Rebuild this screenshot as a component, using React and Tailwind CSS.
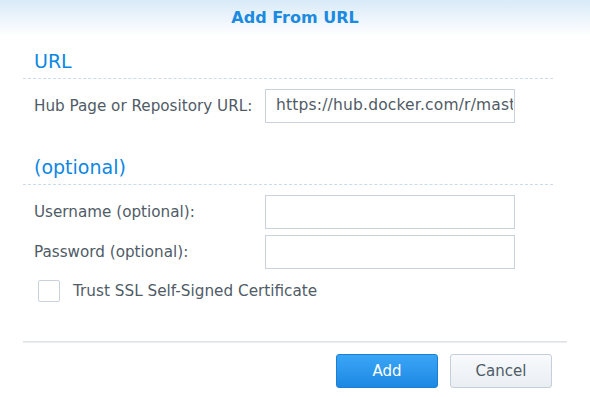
export default function App() {
  return (
    <div className="w-[590px] h-[397px] bg-white overflow-hidden flex flex-col" style={{ fontFamily: '"DejaVu Sans", Verdana, sans-serif' }}>
      <div className="h-[36px] shrink-0 flex items-center justify-center bg-gradient-to-b from-[#d9eaf8] to-white">
        <span className="text-[16px] font-bold text-[#1b8ae0]">Add From URL</span>
      </div>
      <div className="px-[23px] flex-1 flex flex-col">
        <div className="mt-[13px] mr-[14px] pl-[11px] pb-[5px] h-[30px] border-b border-dashed border-[#c9dcec] text-[19px] leading-[24px] text-[#0b87e3]">URL</div>
        <div className="mt-[10px] flex items-center pl-[11px]">
          <div className="w-[231px] text-[15.2px] text-[#505b66]">Hub Page or Repository URL:</div>
          <div className="w-[250px] h-[34px] border border-[#c8d1dc] pl-[10px] pr-[1px] flex items-center">
            <div className="overflow-hidden whitespace-nowrap text-[15.5px] tracking-[0.18px] text-[#505b66]">https://hub.docker.com/r/mastodon/mastodon</div>
          </div>
        </div>
        <div className="mt-[32px] mr-[14px] pl-[11px] pb-[5px] h-[30px] border-b border-dashed border-[#c9dcec] text-[19px] leading-[24px] text-[#0b87e3]">(optional)</div>
        <div className="mt-[10px] flex items-center pl-[11px]">
          <div className="w-[231px] text-[15.2px] text-[#505b66]">Username (optional):</div>
          <div className="w-[250px] h-[34px] border border-[#c8d1dc]"></div>
        </div>
        <div className="mt-[6px] flex items-center pl-[11px]">
          <div className="w-[231px] text-[15.2px] text-[#505b66]">Password (optional):</div>
          <div className="w-[250px] h-[34px] border border-[#c8d1dc]"></div>
        </div>
        <div className="mt-[11px] flex items-center pl-[15px]">
          <div className="w-[22px] h-[22px] border border-[#c8d1dc] rounded-[2px] bg-white"></div>
          <div className="ml-[13px] text-[15.25px] text-[#505b66]">Trust SSL Self-Signed Certificate</div>
        </div>
        <div className="mt-auto h-[2px] bg-gradient-to-b from-[#dcdfe3] to-[#f0f1f3]"></div>
        <div className="mt-[11px] mb-[9px] flex justify-end gap-[12px] pr-[15px]">
          <button className="w-[102px] h-[34px] rounded-[3px] border border-[#1b7fd6] bg-gradient-to-b from-[#3aa6f6] to-[#1d88e3] text-white text-[15px]" style={{ fontFamily: '"DejaVu Sans", Verdana, sans-serif' }}>Add</button>
          <button className="w-[102px] h-[34px] rounded-[3px] border border-[#c5cfdb] bg-gradient-to-b from-[#f8fafc] to-[#e9eef3] text-[#505b66] text-[15px]" style={{ fontFamily: '"DejaVu Sans", Verdana, sans-serif' }}>Cancel</button>
        </div>
      </div>
    </div>
  );
}
